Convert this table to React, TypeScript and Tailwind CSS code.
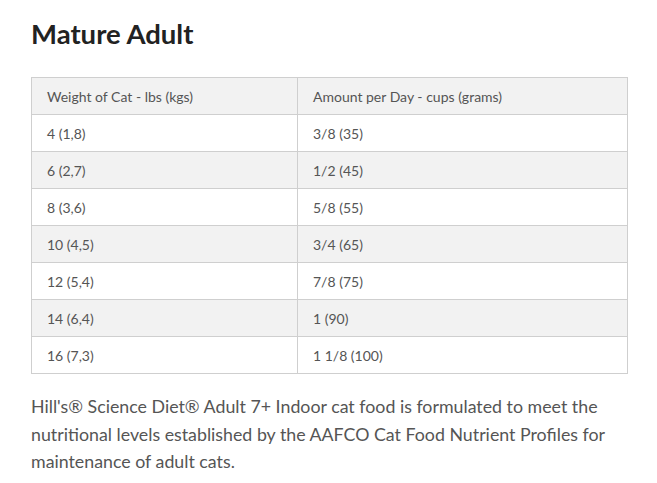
const rows: [string, string][] = [
  ["4 (1,8)", "3/8 (35)"],
  ["6 (2,7)", "1/2 (45)"],
  ["8 (3,6)", "5/8 (55)"],
  ["10 (4,5)", "3/4 (65)"],
  ["12 (5,4)", "7/8 (75)"],
  ["14 (6,4)", "1 (90)"],
  ["16 (7,3)", "1 1/8 (100)"],
];

export default function App() {
  return (
    <div className="min-h-[483px] bg-white px-[31px] pt-[17px] font-['Lato',sans-serif]">
      <h2 className="text-[27.5px] font-bold leading-[34px] text-[#222]">Mature Adult</h2>

      <table className="mt-[26px] w-[597px] border-collapse text-[14px] text-[#555]">
        <thead>
          <tr className="bg-[#f2f2f2]">
            <th className="h-[37px] w-[266px] border border-[#cfcfcf] px-[15px] text-left font-normal">
              Weight of Cat - lbs (kgs)
            </th>
            <th className="h-[37px] border border-[#cfcfcf] px-[15px] text-left font-normal">
              Amount per Day - cups (grams)
            </th>
          </tr>
        </thead>
        <tbody>
          {rows.map(([w, a], i) => (
            <tr key={w} className={i % 2 === 1 ? "bg-[#f2f2f2]" : "bg-white"}>
              <td className="h-[37px] border border-[#cfcfcf] px-[15px]">{w}</td>
              <td className="h-[37px] border border-[#cfcfcf] px-[15px]">{a}</td>
            </tr>
          ))}
        </tbody>
      </table>

      <p className="mt-[19px] w-[600px] text-[17.8px] leading-[27.5px] text-[#555]">
        Hill's® Science Diet® Adult 7+ Indoor cat food is formulated to meet the nutritional levels
        established by the AAFCO Cat Food Nutrient Profiles for maintenance of adult cats.
      </p>
    </div>
  );
}
